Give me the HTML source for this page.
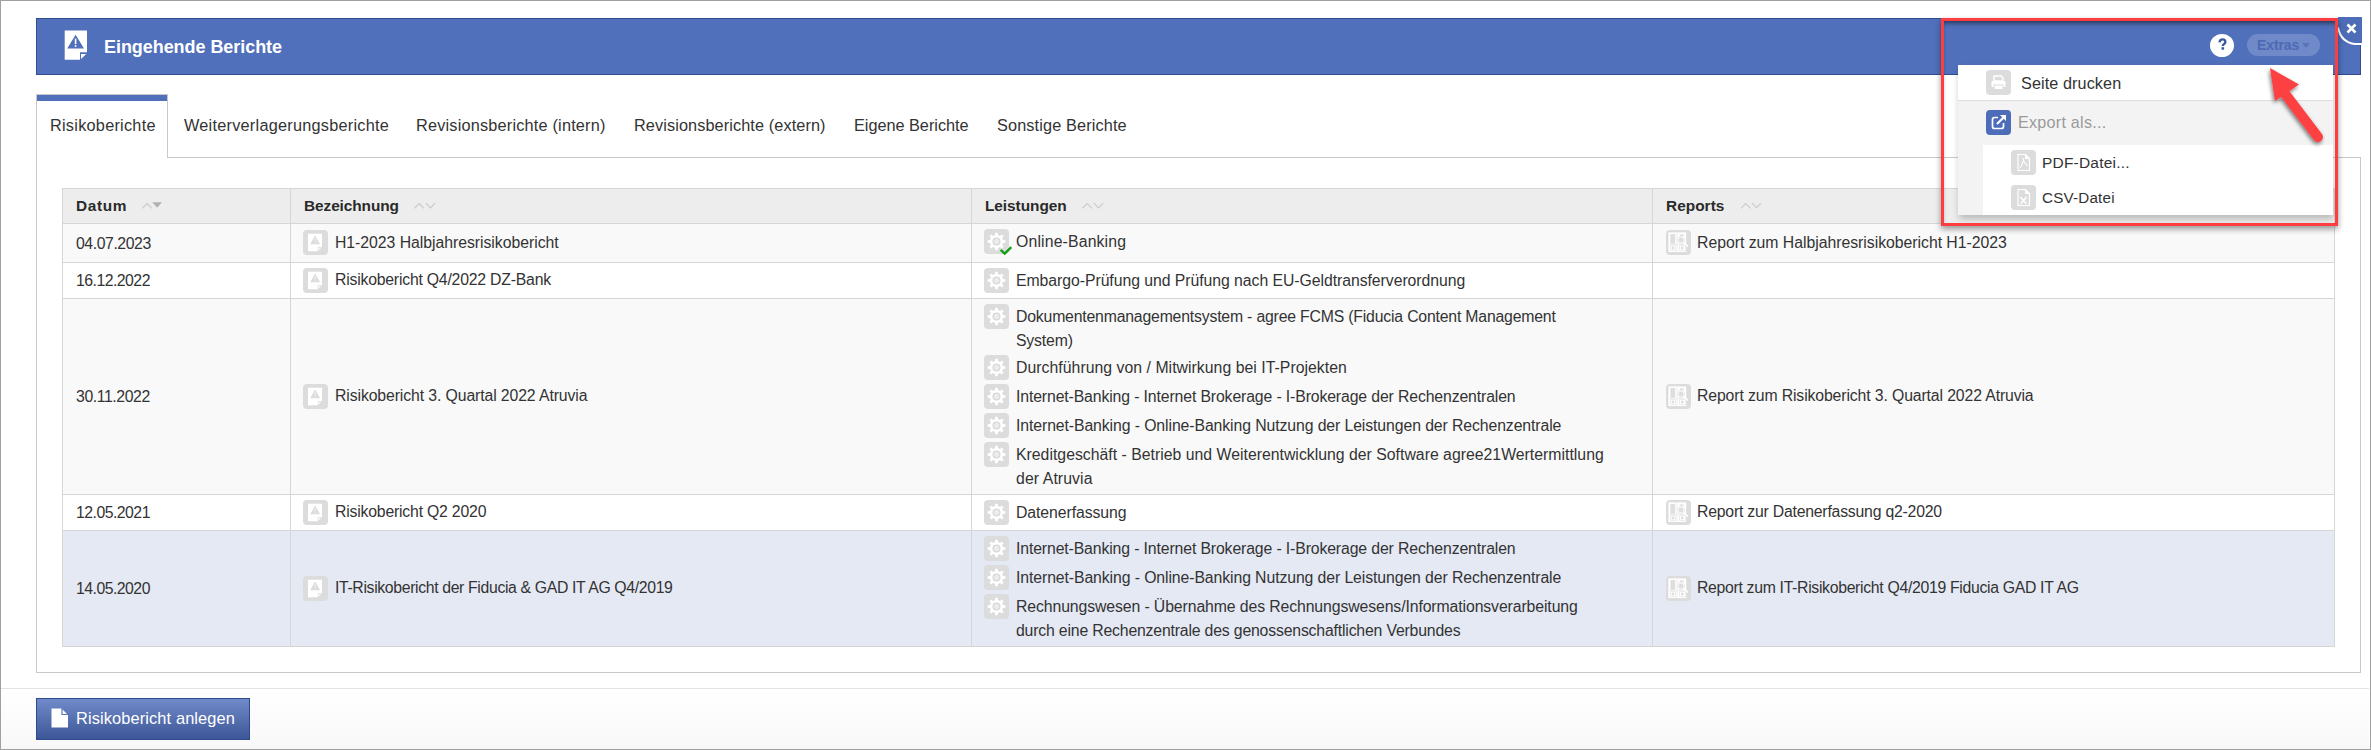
<!DOCTYPE html>
<html><head><meta charset="utf-8">
<style>
*{box-sizing:border-box;margin:0;padding:0}
html,body{width:2371px;height:750px;overflow:hidden;background:#fff}
body{position:relative;font-family:"Liberation Sans",sans-serif;color:#333;font-size:15.6px}
.a{position:absolute}
.frame{left:0;top:0;width:2371px;height:750px;border:1px solid #a0a0a0}
.hdr{left:36px;top:18px;width:2325px;height:57px;background:#5070bb;border:1px solid #2f4c8e}
.title{left:104px;top:35px;font-weight:700;font-size:18px;color:#fff;line-height:24px;white-space:nowrap}
.tabline{left:167px;top:157px;width:2194px;height:1px;background:#c8c8c8}
.panel{left:36px;top:157px;width:2325px;height:516px;border:1px solid #c8c8c8;border-top:none}
.acttab{left:36px;top:94px;width:132px;height:64px;background:#fff;border:1px solid #c8c8c8;border-bottom:none;box-shadow:inset 0 6px 0 #5070bb}
.tab{top:113px;line-height:24px;font-size:16.3px;white-space:nowrap;color:#333}
.tbl{left:62px;top:188px;width:2273px;height:459px;border:1px solid #d6d6d6;background:#f9f9f9}
.row{left:63px;width:2271px;border-top:1px solid #d6d6d6}
.vl{width:1px;background:#d6d6d6;top:189px;height:457px}
.th{top:194px;line-height:24px;font-weight:700;font-size:15.6px;color:#222;white-space:nowrap}
.t{line-height:24px;white-space:nowrap;color:#333}
.date{font-size:14.7px}
.ico{width:25px;height:25px;border-radius:4px;background:#dcdcdc}
.ico svg{position:absolute;left:0;top:0}
.footline{left:1px;top:688px;width:2368px;height:1px;background:#e2e2e2}
.foot{left:1px;top:689px;width:2368px;height:60px;background:linear-gradient(#fff,#f8f8f8)}
.btn{left:36px;top:698px;width:214px;height:42px;background:linear-gradient(#718ac9,#3d5697);border:1px solid #2f4a8c}
</style></head><body>
<div class="a frame"></div>

<!-- header -->
<div class="a hdr"></div>
<svg class="a" style="left:64px;top:30px" width="24" height="31" viewBox="0 0 24 31">
  <path d="M0.7 0.4H23V22.2H16V29.7H0.7Z" fill="#fff"/>
  <path d="M11.6 4.8L20 18.6H3.2Z" fill="#5070bb"/>
  <rect x="10.8" y="8.6" width="1.6" height="5.6" fill="#fff"/><rect x="10.8" y="15.2" width="1.6" height="1.7" fill="#fff"/>
  <path d="M17 23.9H22.2L17 29Z" fill="#fff"/>
</svg>
<div class="a t" style="left:104px;top:35.0px;font-size:18px;letter-spacing:-0.056px;font-weight:700;color:#fff">Eingehende Berichte</div>

<!-- tabs -->
<div class="a tabline"></div>
<div class="a panel"></div>
<div class="a acttab"></div>
<div class="a t" style="left:50px;top:113.0px;font-size:16.3px;letter-spacing:0.249px;">Risikoberichte</div>
<div class="a t" style="left:184px;top:113.0px;font-size:16.3px;letter-spacing:0.240px;">Weiterverlagerungsberichte</div>
<div class="a t" style="left:416px;top:113.0px;font-size:16.3px;letter-spacing:0.192px;">Revisionsberichte (intern)</div>
<div class="a t" style="left:634px;top:113.0px;font-size:16.3px;letter-spacing:0.096px;">Revisionsberichte (extern)</div>
<div class="a t" style="left:854px;top:113.0px;font-size:16.3px;letter-spacing:-0.026px;">Eigene Berichte</div>
<div class="a t" style="left:997px;top:113.0px;font-size:16.3px;letter-spacing:0.125px;">Sonstige Berichte</div>

<!-- table -->
<div class="a tbl"></div>
<div class="a" style="left:63px;top:189px;width:2271px;height:34px;background:#ededed"></div>
<div class="a" style="left:63px;top:262px;width:2271px;height:36px;background:#fff"></div>
<div class="a" style="left:63px;top:494px;width:2271px;height:36px;background:#fff"></div>
<div class="a" style="left:63px;top:530px;width:2271px;height:116px;background:#e5e9f4"></div>
<div class="a row" style="top:223px"></div>
<div class="a row" style="top:262px"></div>
<div class="a row" style="top:298px"></div>
<div class="a row" style="top:494px"></div>
<div class="a row" style="top:530px"></div>
<div class="a vl" style="left:290px"></div>
<div class="a vl" style="left:971px"></div>
<div class="a vl" style="left:1652px"></div>

<div class="a t" style="left:76px;top:194.2px;font-size:15.4px;letter-spacing:0.650px;font-weight:700;color:#2a2a2a">Datum</div>
<div class="a t" style="left:304px;top:194.2px;font-size:15.4px;letter-spacing:-0.080px;font-weight:700;color:#2a2a2a">Bezeichnung</div>
<div class="a t" style="left:985px;top:194.2px;font-size:15.4px;letter-spacing:-0.049px;font-weight:700;color:#2a2a2a">Leistungen</div>
<div class="a t" style="left:1666px;top:194.2px;font-size:15.4px;letter-spacing:0.032px;font-weight:700;color:#2a2a2a">Reports</div>

<div class="a t" style="left:76px;top:231.5px;font-size:15.8px;letter-spacing:-0.429px;">04.07.2023</div>
<div class="a ico" style="left:303px;top:230px"><svg width="25" height="25" viewBox="0 0 25 25">
<path d="M5 3.7H19V17H14.8V21.3H5Z" fill="#fff"/><path d="M12.1 5.6L17 14.2H7.2Z" fill="#dcdcdc"/>
<rect x="11.6" y="8.2" width="1" height="3.4" fill="#f2f2f2"/><rect x="11.6" y="12.3" width="1" height="1" fill="#f2f2f2"/>
<path d="M15.5 17.8H18.3L15.5 20.6Z" fill="#fff"/></svg></div>
<div class="a t" style="left:335px;top:230.7px;font-size:15.8px;letter-spacing:-0.038px;">H1-2023 Halbjahresrisikobericht</div>
<div class="a ico" style="left:1666px;top:230px"><svg width="25" height="25" viewBox="0 0 25 25">
<rect x="2.4" y="2.4" width="17.8" height="19.6" fill="#fff"/>
<rect x="4.4" y="4" width="4.8" height="9.8" fill="#dedede"/>
<rect x="10.5" y="2.4" width="0.9" height="19.6" fill="#ececec"/><rect x="2.4" y="14.2" width="17.8" height="0.9" fill="#ececec"/>
<rect x="13.8" y="4.3" width="4" height="1.6" fill="#e2e2e2"/>
<circle cx="15" cy="10" r="3.7" fill="#fff" stroke="#ececec" stroke-width="1"/><circle cx="15" cy="10" r="2.5" fill="#dedede"/>
<path d="M17.8 12.9L21.8 16.4" stroke="#fff" stroke-width="1.5"/>
<rect x="4.6" y="15.6" width="5" height="4.8" fill="#fff" stroke="#e8e8e8" stroke-width="0.8"/><rect x="13.4" y="15.6" width="6" height="4.8" fill="#fff" stroke="#e8e8e8" stroke-width="0.8"/>
<circle cx="7" cy="18" r="1.4" fill="#dedede"/><circle cx="16.2" cy="18" r="1.4" fill="#dedede"/>
</svg></div>
<div class="a t" style="left:1697px;top:230.7px;font-size:15.8px;letter-spacing:-0.024px;">Report zum Halbjahresrisikobericht H1-2023</div>
<div class="a ico" style="left:984px;top:229px"><svg width="25" height="25" viewBox="0 0 25 25">
<path d="M11.02 6.07 L11.26 3.69 L13.74 3.69 L13.98 6.07 L16.00 6.90 L17.86 5.39 L19.61 7.14 L18.10 9.00 L18.93 11.02 L21.31 11.26 L21.31 13.74 L18.93 13.98 L18.10 16.00 L19.61 17.86 L17.86 19.61 L16.00 18.10 L13.98 18.93 L13.74 21.31 L11.26 21.31 L11.02 18.93 L9.00 18.10 L7.14 19.61 L5.39 17.86 L6.90 16.00 L6.07 13.98 L3.69 13.74 L3.69 11.26 L6.07 11.02 L6.90 9.00 L5.39 7.14 L7.14 5.39 L9.00 6.90Z" fill="#fff"/><circle cx="12.5" cy="12.5" r="3.4" fill="#ececec" stroke="#d8d8d8" stroke-width="1.3"/></svg></div>
<svg class="a" style="left:999px;top:245px" width="14" height="11" viewBox="0 0 14 11"><path d="M1.7 4.9L5.7 8.6L12.3 2.2" fill="none" stroke="#14a014" stroke-width="2.3"/></svg>
<div class="a t" style="left:1016px;top:230.0px;font-size:15.8px;letter-spacing:0.154px;">Online-Banking</div>
<div class="a t" style="left:76px;top:269.0px;font-size:15.8px;letter-spacing:-0.516px;">16.12.2022</div>
<div class="a ico" style="left:303px;top:268px"><svg width="25" height="25" viewBox="0 0 25 25">
<path d="M5 3.7H19V17H14.8V21.3H5Z" fill="#fff"/><path d="M12.1 5.6L17 14.2H7.2Z" fill="#dcdcdc"/>
<rect x="11.6" y="8.2" width="1" height="3.4" fill="#f2f2f2"/><rect x="11.6" y="12.3" width="1" height="1" fill="#f2f2f2"/>
<path d="M15.5 17.8H18.3L15.5 20.6Z" fill="#fff"/></svg></div>
<div class="a t" style="left:335px;top:268.2px;font-size:15.8px;letter-spacing:-0.215px;">Risikobericht Q4/2022 DZ-Bank</div>
<div class="a ico" style="left:984px;top:268px"><svg width="25" height="25" viewBox="0 0 25 25">
<path d="M11.02 6.07 L11.26 3.69 L13.74 3.69 L13.98 6.07 L16.00 6.90 L17.86 5.39 L19.61 7.14 L18.10 9.00 L18.93 11.02 L21.31 11.26 L21.31 13.74 L18.93 13.98 L18.10 16.00 L19.61 17.86 L17.86 19.61 L16.00 18.10 L13.98 18.93 L13.74 21.31 L11.26 21.31 L11.02 18.93 L9.00 18.10 L7.14 19.61 L5.39 17.86 L6.90 16.00 L6.07 13.98 L3.69 13.74 L3.69 11.26 L6.07 11.02 L6.90 9.00 L5.39 7.14 L7.14 5.39 L9.00 6.90Z" fill="#fff"/><circle cx="12.5" cy="12.5" r="3.4" fill="#ececec" stroke="#d8d8d8" stroke-width="1.3"/></svg></div>
<div class="a t" style="left:1016px;top:269.0px;font-size:15.8px;letter-spacing:-0.052px;">Embargo-Prüfung und Prüfung nach EU-Geldtransferverordnung</div>
<div class="a t" style="left:76px;top:385.0px;font-size:15.8px;letter-spacing:-0.405px;">30.11.2022</div>
<div class="a ico" style="left:303px;top:384px"><svg width="25" height="25" viewBox="0 0 25 25">
<path d="M5 3.7H19V17H14.8V21.3H5Z" fill="#fff"/><path d="M12.1 5.6L17 14.2H7.2Z" fill="#dcdcdc"/>
<rect x="11.6" y="8.2" width="1" height="3.4" fill="#f2f2f2"/><rect x="11.6" y="12.3" width="1" height="1" fill="#f2f2f2"/>
<path d="M15.5 17.8H18.3L15.5 20.6Z" fill="#fff"/></svg></div>
<div class="a t" style="left:335px;top:384.2px;font-size:15.8px;letter-spacing:-0.109px;">Risikobericht 3. Quartal 2022 Atruvia</div>
<div class="a ico" style="left:1666px;top:384px"><svg width="25" height="25" viewBox="0 0 25 25">
<rect x="2.4" y="2.4" width="17.8" height="19.6" fill="#fff"/>
<rect x="4.4" y="4" width="4.8" height="9.8" fill="#dedede"/>
<rect x="10.5" y="2.4" width="0.9" height="19.6" fill="#ececec"/><rect x="2.4" y="14.2" width="17.8" height="0.9" fill="#ececec"/>
<rect x="13.8" y="4.3" width="4" height="1.6" fill="#e2e2e2"/>
<circle cx="15" cy="10" r="3.7" fill="#fff" stroke="#ececec" stroke-width="1"/><circle cx="15" cy="10" r="2.5" fill="#dedede"/>
<path d="M17.8 12.9L21.8 16.4" stroke="#fff" stroke-width="1.5"/>
<rect x="4.6" y="15.6" width="5" height="4.8" fill="#fff" stroke="#e8e8e8" stroke-width="0.8"/><rect x="13.4" y="15.6" width="6" height="4.8" fill="#fff" stroke="#e8e8e8" stroke-width="0.8"/>
<circle cx="7" cy="18" r="1.4" fill="#dedede"/><circle cx="16.2" cy="18" r="1.4" fill="#dedede"/>
</svg></div>
<div class="a t" style="left:1697px;top:384.2px;font-size:15.8px;letter-spacing:-0.123px;">Report zum Risikobericht 3. Quartal 2022 Atruvia</div>
<div class="a ico" style="left:984px;top:304px"><svg width="25" height="25" viewBox="0 0 25 25">
<path d="M11.02 6.07 L11.26 3.69 L13.74 3.69 L13.98 6.07 L16.00 6.90 L17.86 5.39 L19.61 7.14 L18.10 9.00 L18.93 11.02 L21.31 11.26 L21.31 13.74 L18.93 13.98 L18.10 16.00 L19.61 17.86 L17.86 19.61 L16.00 18.10 L13.98 18.93 L13.74 21.31 L11.26 21.31 L11.02 18.93 L9.00 18.10 L7.14 19.61 L5.39 17.86 L6.90 16.00 L6.07 13.98 L3.69 13.74 L3.69 11.26 L6.07 11.02 L6.90 9.00 L5.39 7.14 L7.14 5.39 L9.00 6.90Z" fill="#fff"/><circle cx="12.5" cy="12.5" r="3.4" fill="#ececec" stroke="#d8d8d8" stroke-width="1.3"/></svg></div>
<div class="a t" style="left:1016px;top:305.0px;font-size:15.8px;letter-spacing:-0.188px;">Dokumentenmanagementsystem - agree FCMS (Fiducia Content Management</div>
<div class="a t" style="left:1016px;top:329.0px;font-size:15.8px;letter-spacing:-0.167px;">System)</div>
<div class="a ico" style="left:984px;top:355px"><svg width="25" height="25" viewBox="0 0 25 25">
<path d="M11.02 6.07 L11.26 3.69 L13.74 3.69 L13.98 6.07 L16.00 6.90 L17.86 5.39 L19.61 7.14 L18.10 9.00 L18.93 11.02 L21.31 11.26 L21.31 13.74 L18.93 13.98 L18.10 16.00 L19.61 17.86 L17.86 19.61 L16.00 18.10 L13.98 18.93 L13.74 21.31 L11.26 21.31 L11.02 18.93 L9.00 18.10 L7.14 19.61 L5.39 17.86 L6.90 16.00 L6.07 13.98 L3.69 13.74 L3.69 11.26 L6.07 11.02 L6.90 9.00 L5.39 7.14 L7.14 5.39 L9.00 6.90Z" fill="#fff"/><circle cx="12.5" cy="12.5" r="3.4" fill="#ececec" stroke="#d8d8d8" stroke-width="1.3"/></svg></div>
<div class="a t" style="left:1016px;top:356.0px;font-size:15.8px;letter-spacing:0.035px;">Durchführung von / Mitwirkung bei IT-Projekten</div>
<div class="a ico" style="left:984px;top:384px"><svg width="25" height="25" viewBox="0 0 25 25">
<path d="M11.02 6.07 L11.26 3.69 L13.74 3.69 L13.98 6.07 L16.00 6.90 L17.86 5.39 L19.61 7.14 L18.10 9.00 L18.93 11.02 L21.31 11.26 L21.31 13.74 L18.93 13.98 L18.10 16.00 L19.61 17.86 L17.86 19.61 L16.00 18.10 L13.98 18.93 L13.74 21.31 L11.26 21.31 L11.02 18.93 L9.00 18.10 L7.14 19.61 L5.39 17.86 L6.90 16.00 L6.07 13.98 L3.69 13.74 L3.69 11.26 L6.07 11.02 L6.90 9.00 L5.39 7.14 L7.14 5.39 L9.00 6.90Z" fill="#fff"/><circle cx="12.5" cy="12.5" r="3.4" fill="#ececec" stroke="#d8d8d8" stroke-width="1.3"/></svg></div>
<div class="a t" style="left:1016px;top:385.0px;font-size:15.8px;letter-spacing:-0.125px;">Internet-Banking - Internet Brokerage - I-Brokerage der Rechenzentralen</div>
<div class="a ico" style="left:984px;top:413px"><svg width="25" height="25" viewBox="0 0 25 25">
<path d="M11.02 6.07 L11.26 3.69 L13.74 3.69 L13.98 6.07 L16.00 6.90 L17.86 5.39 L19.61 7.14 L18.10 9.00 L18.93 11.02 L21.31 11.26 L21.31 13.74 L18.93 13.98 L18.10 16.00 L19.61 17.86 L17.86 19.61 L16.00 18.10 L13.98 18.93 L13.74 21.31 L11.26 21.31 L11.02 18.93 L9.00 18.10 L7.14 19.61 L5.39 17.86 L6.90 16.00 L6.07 13.98 L3.69 13.74 L3.69 11.26 L6.07 11.02 L6.90 9.00 L5.39 7.14 L7.14 5.39 L9.00 6.90Z" fill="#fff"/><circle cx="12.5" cy="12.5" r="3.4" fill="#ececec" stroke="#d8d8d8" stroke-width="1.3"/></svg></div>
<div class="a t" style="left:1016px;top:414.0px;font-size:15.8px;letter-spacing:-0.094px;">Internet-Banking - Online-Banking Nutzung der Leistungen der Rechenzentrale</div>
<div class="a ico" style="left:984px;top:442px"><svg width="25" height="25" viewBox="0 0 25 25">
<path d="M11.02 6.07 L11.26 3.69 L13.74 3.69 L13.98 6.07 L16.00 6.90 L17.86 5.39 L19.61 7.14 L18.10 9.00 L18.93 11.02 L21.31 11.26 L21.31 13.74 L18.93 13.98 L18.10 16.00 L19.61 17.86 L17.86 19.61 L16.00 18.10 L13.98 18.93 L13.74 21.31 L11.26 21.31 L11.02 18.93 L9.00 18.10 L7.14 19.61 L5.39 17.86 L6.90 16.00 L6.07 13.98 L3.69 13.74 L3.69 11.26 L6.07 11.02 L6.90 9.00 L5.39 7.14 L7.14 5.39 L9.00 6.90Z" fill="#fff"/><circle cx="12.5" cy="12.5" r="3.4" fill="#ececec" stroke="#d8d8d8" stroke-width="1.3"/></svg></div>
<div class="a t" style="left:1016px;top:443.0px;font-size:15.8px;letter-spacing:0.011px;">Kreditgeschäft - Betrieb und Weiterentwicklung der Software agree21Wertermittlung</div>
<div class="a t" style="left:1016px;top:467.0px;font-size:15.8px;letter-spacing:0.100px;">der Atruvia</div>
<div class="a t" style="left:76px;top:501.0px;font-size:15.8px;letter-spacing:-0.515px;">12.05.2021</div>
<div class="a ico" style="left:303px;top:500px"><svg width="25" height="25" viewBox="0 0 25 25">
<path d="M5 3.7H19V17H14.8V21.3H5Z" fill="#fff"/><path d="M12.1 5.6L17 14.2H7.2Z" fill="#dcdcdc"/>
<rect x="11.6" y="8.2" width="1" height="3.4" fill="#f2f2f2"/><rect x="11.6" y="12.3" width="1" height="1" fill="#f2f2f2"/>
<path d="M15.5 17.8H18.3L15.5 20.6Z" fill="#fff"/></svg></div>
<div class="a t" style="left:335px;top:500.2px;font-size:15.8px;letter-spacing:-0.200px;">Risikobericht Q2 2020</div>
<div class="a ico" style="left:1666px;top:500px"><svg width="25" height="25" viewBox="0 0 25 25">
<rect x="2.4" y="2.4" width="17.8" height="19.6" fill="#fff"/>
<rect x="4.4" y="4" width="4.8" height="9.8" fill="#dedede"/>
<rect x="10.5" y="2.4" width="0.9" height="19.6" fill="#ececec"/><rect x="2.4" y="14.2" width="17.8" height="0.9" fill="#ececec"/>
<rect x="13.8" y="4.3" width="4" height="1.6" fill="#e2e2e2"/>
<circle cx="15" cy="10" r="3.7" fill="#fff" stroke="#ececec" stroke-width="1"/><circle cx="15" cy="10" r="2.5" fill="#dedede"/>
<path d="M17.8 12.9L21.8 16.4" stroke="#fff" stroke-width="1.5"/>
<rect x="4.6" y="15.6" width="5" height="4.8" fill="#fff" stroke="#e8e8e8" stroke-width="0.8"/><rect x="13.4" y="15.6" width="6" height="4.8" fill="#fff" stroke="#e8e8e8" stroke-width="0.8"/>
<circle cx="7" cy="18" r="1.4" fill="#dedede"/><circle cx="16.2" cy="18" r="1.4" fill="#dedede"/>
</svg></div>
<div class="a t" style="left:1697px;top:500.2px;font-size:15.8px;letter-spacing:-0.218px;">Report zur Datenerfassung q2-2020</div>
<div class="a ico" style="left:984px;top:500px"><svg width="25" height="25" viewBox="0 0 25 25">
<path d="M11.02 6.07 L11.26 3.69 L13.74 3.69 L13.98 6.07 L16.00 6.90 L17.86 5.39 L19.61 7.14 L18.10 9.00 L18.93 11.02 L21.31 11.26 L21.31 13.74 L18.93 13.98 L18.10 16.00 L19.61 17.86 L17.86 19.61 L16.00 18.10 L13.98 18.93 L13.74 21.31 L11.26 21.31 L11.02 18.93 L9.00 18.10 L7.14 19.61 L5.39 17.86 L6.90 16.00 L6.07 13.98 L3.69 13.74 L3.69 11.26 L6.07 11.02 L6.90 9.00 L5.39 7.14 L7.14 5.39 L9.00 6.90Z" fill="#fff"/><circle cx="12.5" cy="12.5" r="3.4" fill="#ececec" stroke="#d8d8d8" stroke-width="1.3"/></svg></div>
<div class="a t" style="left:1016px;top:501.0px;font-size:15.8px;letter-spacing:-0.077px;">Datenerfassung</div>
<div class="a t" style="left:76px;top:577.0px;font-size:15.8px;letter-spacing:-0.516px;">14.05.2020</div>
<div class="a ico" style="left:303px;top:576px"><svg width="25" height="25" viewBox="0 0 25 25">
<path d="M5 3.7H19V17H14.8V21.3H5Z" fill="#fff"/><path d="M12.1 5.6L17 14.2H7.2Z" fill="#dcdcdc"/>
<rect x="11.6" y="8.2" width="1" height="3.4" fill="#f2f2f2"/><rect x="11.6" y="12.3" width="1" height="1" fill="#f2f2f2"/>
<path d="M15.5 17.8H18.3L15.5 20.6Z" fill="#fff"/></svg></div>
<div class="a t" style="left:335px;top:576.2px;font-size:15.8px;letter-spacing:-0.352px;">IT-Risikobericht der Fiducia &amp; GAD IT AG Q4/2019</div>
<div class="a ico" style="left:1666px;top:576px"><svg width="25" height="25" viewBox="0 0 25 25">
<rect x="2.4" y="2.4" width="17.8" height="19.6" fill="#fff"/>
<rect x="4.4" y="4" width="4.8" height="9.8" fill="#dedede"/>
<rect x="10.5" y="2.4" width="0.9" height="19.6" fill="#ececec"/><rect x="2.4" y="14.2" width="17.8" height="0.9" fill="#ececec"/>
<rect x="13.8" y="4.3" width="4" height="1.6" fill="#e2e2e2"/>
<circle cx="15" cy="10" r="3.7" fill="#fff" stroke="#ececec" stroke-width="1"/><circle cx="15" cy="10" r="2.5" fill="#dedede"/>
<path d="M17.8 12.9L21.8 16.4" stroke="#fff" stroke-width="1.5"/>
<rect x="4.6" y="15.6" width="5" height="4.8" fill="#fff" stroke="#e8e8e8" stroke-width="0.8"/><rect x="13.4" y="15.6" width="6" height="4.8" fill="#fff" stroke="#e8e8e8" stroke-width="0.8"/>
<circle cx="7" cy="18" r="1.4" fill="#dedede"/><circle cx="16.2" cy="18" r="1.4" fill="#dedede"/>
</svg></div>
<div class="a t" style="left:1697px;top:576.2px;font-size:15.8px;letter-spacing:-0.315px;">Report zum IT-Risikobericht Q4/2019 Fiducia GAD IT AG</div>
<div class="a ico" style="left:984px;top:536px"><svg width="25" height="25" viewBox="0 0 25 25">
<path d="M11.02 6.07 L11.26 3.69 L13.74 3.69 L13.98 6.07 L16.00 6.90 L17.86 5.39 L19.61 7.14 L18.10 9.00 L18.93 11.02 L21.31 11.26 L21.31 13.74 L18.93 13.98 L18.10 16.00 L19.61 17.86 L17.86 19.61 L16.00 18.10 L13.98 18.93 L13.74 21.31 L11.26 21.31 L11.02 18.93 L9.00 18.10 L7.14 19.61 L5.39 17.86 L6.90 16.00 L6.07 13.98 L3.69 13.74 L3.69 11.26 L6.07 11.02 L6.90 9.00 L5.39 7.14 L7.14 5.39 L9.00 6.90Z" fill="#fff"/><circle cx="12.5" cy="12.5" r="3.4" fill="#ececec" stroke="#d8d8d8" stroke-width="1.3"/></svg></div>
<div class="a t" style="left:1016px;top:537.0px;font-size:15.8px;letter-spacing:-0.125px;">Internet-Banking - Internet Brokerage - I-Brokerage der Rechenzentralen</div>
<div class="a ico" style="left:984px;top:565px"><svg width="25" height="25" viewBox="0 0 25 25">
<path d="M11.02 6.07 L11.26 3.69 L13.74 3.69 L13.98 6.07 L16.00 6.90 L17.86 5.39 L19.61 7.14 L18.10 9.00 L18.93 11.02 L21.31 11.26 L21.31 13.74 L18.93 13.98 L18.10 16.00 L19.61 17.86 L17.86 19.61 L16.00 18.10 L13.98 18.93 L13.74 21.31 L11.26 21.31 L11.02 18.93 L9.00 18.10 L7.14 19.61 L5.39 17.86 L6.90 16.00 L6.07 13.98 L3.69 13.74 L3.69 11.26 L6.07 11.02 L6.90 9.00 L5.39 7.14 L7.14 5.39 L9.00 6.90Z" fill="#fff"/><circle cx="12.5" cy="12.5" r="3.4" fill="#ececec" stroke="#d8d8d8" stroke-width="1.3"/></svg></div>
<div class="a t" style="left:1016px;top:566.0px;font-size:15.8px;letter-spacing:-0.095px;">Internet-Banking - Online-Banking Nutzung der Leistungen der Rechenzentrale</div>
<div class="a ico" style="left:984px;top:594px"><svg width="25" height="25" viewBox="0 0 25 25">
<path d="M11.02 6.07 L11.26 3.69 L13.74 3.69 L13.98 6.07 L16.00 6.90 L17.86 5.39 L19.61 7.14 L18.10 9.00 L18.93 11.02 L21.31 11.26 L21.31 13.74 L18.93 13.98 L18.10 16.00 L19.61 17.86 L17.86 19.61 L16.00 18.10 L13.98 18.93 L13.74 21.31 L11.26 21.31 L11.02 18.93 L9.00 18.10 L7.14 19.61 L5.39 17.86 L6.90 16.00 L6.07 13.98 L3.69 13.74 L3.69 11.26 L6.07 11.02 L6.90 9.00 L5.39 7.14 L7.14 5.39 L9.00 6.90Z" fill="#fff"/><circle cx="12.5" cy="12.5" r="3.4" fill="#ececec" stroke="#d8d8d8" stroke-width="1.3"/></svg></div>
<div class="a t" style="left:1016px;top:595.0px;font-size:15.8px;letter-spacing:-0.103px;">Rechnungswesen - Übernahme des Rechnungswesens/Informationsverarbeitung</div>
<div class="a t" style="left:1016px;top:619.0px;font-size:15.8px;letter-spacing:-0.176px;">durch eine Rechenzentrale des genossenschaftlichen Verbundes</div>


<!-- footer -->
<div class="a footline"></div>
<div class="a foot"></div>
<div class="a btn"></div>
<div class="a t" style="left:76px;top:706.0px;font-size:16.4px;letter-spacing:0.110px;color:#fff">Risikobericht anlegen</div>


<!-- sort icons -->
<svg class="a" style="left:0;top:0" width="2371" height="230">
<g fill="none" stroke="#cbcbcb" stroke-width="1.2">
<path d="M142.5 208.3L147.3 203.6L152 208.3"/>
<path d="M414.5 208.3L419.3 203.6L424 208.3M425.8 203.1L430.5 207.8L435.2 203.1"/>
<path d="M1082.5 208.3L1087.3 203.6L1092 208.3M1093.8 203.1L1098.5 207.8L1103.2 203.1"/>
<path d="M1741 208.3L1745.7 203.6L1750.4 208.3M1752 203.1L1756.5 207.6L1761 203.1"/>
</g>
<path d="M152.3 202.3H162L157.15 207.8Z" fill="#b0b0b0"/>
</svg>

<!-- button icon -->
<svg class="a" style="left:51px;top:708px" width="18" height="20" viewBox="0 0 18 20"><path d="M0.5 0.5H10.5L17 7V19.5H0.5Z" fill="#fff"/><path d="M11 0.5V6.5H17" fill="none" stroke="#5a73b5" stroke-width="1.2"/></svg>

<!-- close btn -->
<div class="a" style="left:2338px;top:17px;width:24px;height:27px;background:#4e6db8"></div>
<svg class="a" style="left:2336px;top:15px" width="28" height="32" viewBox="0 0 28 32"><path d="M2 12.5Q5 27.5 19 29H26" fill="none" stroke="#fff" stroke-width="2"/></svg>
<svg class="a" style="left:2346px;top:23px" width="11" height="11" viewBox="0 0 11 11"><path d="M1.5 1.5L9.5 9.5M9.5 1.5L1.5 9.5" stroke="#fff" stroke-width="2.6"/></svg>
<!-- red box shadow -->
<div class="a" style="left:1941px;top:18px;width:397px;height:208px;box-shadow:0 3px 6px rgba(0,0,0,.4), inset 0 7px 5px -2px rgba(0,0,0,.55), inset 3px 0 4px -1px rgba(0,0,0,.3)"></div>

<!-- help -->
<div class="a" style="left:2210px;top:33.8px;width:24px;height:22.8px;border-radius:50%;background:#fff"></div>
<svg class="a" style="left:2210px;top:33.3px" width="24" height="24" viewBox="0 0 24 24"><path d="M9.6 9.4Q9.8 6.4 12.6 6.4Q15.3 6.4 15.3 8.9Q15.3 10.4 13.8 11.2Q12.8 11.8 12.8 13" fill="none" stroke="#3c59a3" stroke-width="2.4"/><rect x="11.5" y="14.2" width="2.6" height="2.5" fill="#3c59a3"/></svg>
<!-- extras -->
<div class="a" style="left:2247px;top:34px;width:73px;height:22px;border-radius:11px;background:#7089c9"></div>
<div class="a t" style="left:2257px;top:32.5px;font-size:14px;letter-spacing:-0.100px;font-weight:700;color:#4d6ab4">Extras</div>
<svg class="a" style="left:2302px;top:42.5px" width="8" height="5" viewBox="0 0 8 5"><path d="M0 0H8L4 4.7Z" fill="#5574ba"/></svg>

<!-- dropdown -->
<div class="a" style="left:1958px;top:65px;width:375px;height:150px;background:#f3f3f3;box-shadow:1px 4px 7px rgba(0,0,0,.22)"></div>
<div class="a" style="left:1958px;top:65px;width:375px;height:36px;background:#fff;border-bottom:1px solid #dedede"></div>
<div class="a" style="left:1983px;top:145px;width:350px;height:70px;background:#fff"></div>

<div class="a ico" style="left:1986px;top:70px"><svg width="25" height="25" viewBox="0 0 25 25">
<path d="M8 6H15L17 8V11H8Z" fill="none" stroke="#fff" stroke-width="1.5"/>
<rect x="5.5" y="11" width="14" height="6" rx="1" fill="#fff"/>
<rect x="8" y="15" width="9" height="4.5" fill="#fff" stroke="#dcdcdc" stroke-width="1"/>
</svg></div>
<div class="a t" style="left:2021px;top:70.5px;font-size:16.2px;letter-spacing:0.097px;">Seite drucken</div>

<div class="a" style="left:1986px;top:110px;width:25px;height:25px;border-radius:4px;background:#4e6db8"><svg width="25" height="25" viewBox="0 0 25 25" style="position:absolute;left:0;top:0">
<path d="M12 7.5H8.5Q6.5 7.5 6.5 9.5V16.5Q6.5 18.5 8.5 18.5H15.5Q17.5 18.5 17.5 16.5V13" fill="none" stroke="#fff" stroke-width="1.7"/>
<path d="M11 14L18 7" stroke="#fff" stroke-width="2.2"/><path d="M14 5H20V11Z" fill="#fff"/>
</svg></div>
<div class="a t" style="left:2018px;top:110.0px;font-size:16.1px;letter-spacing:0.268px;color:#9a9a9a">Export als...</div>

<div class="a ico" style="left:2011px;top:150px"><svg width="25" height="25" viewBox="0 0 25 25">
<path d="M7 4.5H14.5L18.5 8.5V20.5H7Z" fill="none" stroke="#fff" stroke-width="1.2"/><path d="M14.5 4.5V8.5H18.5" fill="#fff" stroke="#fff" stroke-width="1"/>
<path d="M12 8Q12.5 13 16.5 15.5M12 11Q11 16 9 18" fill="none" stroke="#fff" stroke-width="1.1"/>
</svg></div>
<div class="a t" style="left:2042px;top:151.0px;font-size:15.5px;letter-spacing:0.203px;">PDF-Datei...</div>
<div class="a ico" style="left:2011px;top:185px"><svg width="25" height="25" viewBox="0 0 25 25">
<path d="M7 4.5H14.5L18.5 8.5V20.5H7Z" fill="none" stroke="#fff" stroke-width="1.2"/><path d="M14.5 4.5V8.5H18.5" fill="#fff" stroke="#fff" stroke-width="1"/>
<path d="M9.5 12L15.5 19M15.5 12L9.5 19" stroke="#fff" stroke-width="1.4"/>
</svg></div>
<div class="a t" style="left:2042px;top:185.7px;font-size:15.2px;letter-spacing:0.200px;">CSV-Datei</div>

<!-- red box -->
<div class="a" style="left:1941px;top:18px;width:397px;height:208px;border:3.3px solid #fd3d3f"></div>

<!-- arrow -->
<svg class="a" style="left:2250px;top:55px;overflow:visible" width="90" height="95" viewBox="0 0 90 95">
<defs><filter id="sh" x="-30%" y="-30%" width="160%" height="160%"><feGaussianBlur in="SourceAlpha" stdDeviation="2"/><feOffset dx="-1" dy="2"/><feComponentTransfer><feFuncA type="linear" slope="0.55"/></feComponentTransfer><feMerge><feMergeNode/><feMergeNode in="SourceGraphic"/></feMerge></filter></defs>
<g filter="url(#sh)">
<path d="M20 13L49 29.5L25 46Z" fill="#fd4043"/>
<path d="M33 36L68 82" stroke="#fd4043" stroke-width="10" stroke-linecap="round"/>
</g></svg>
</body></html>
